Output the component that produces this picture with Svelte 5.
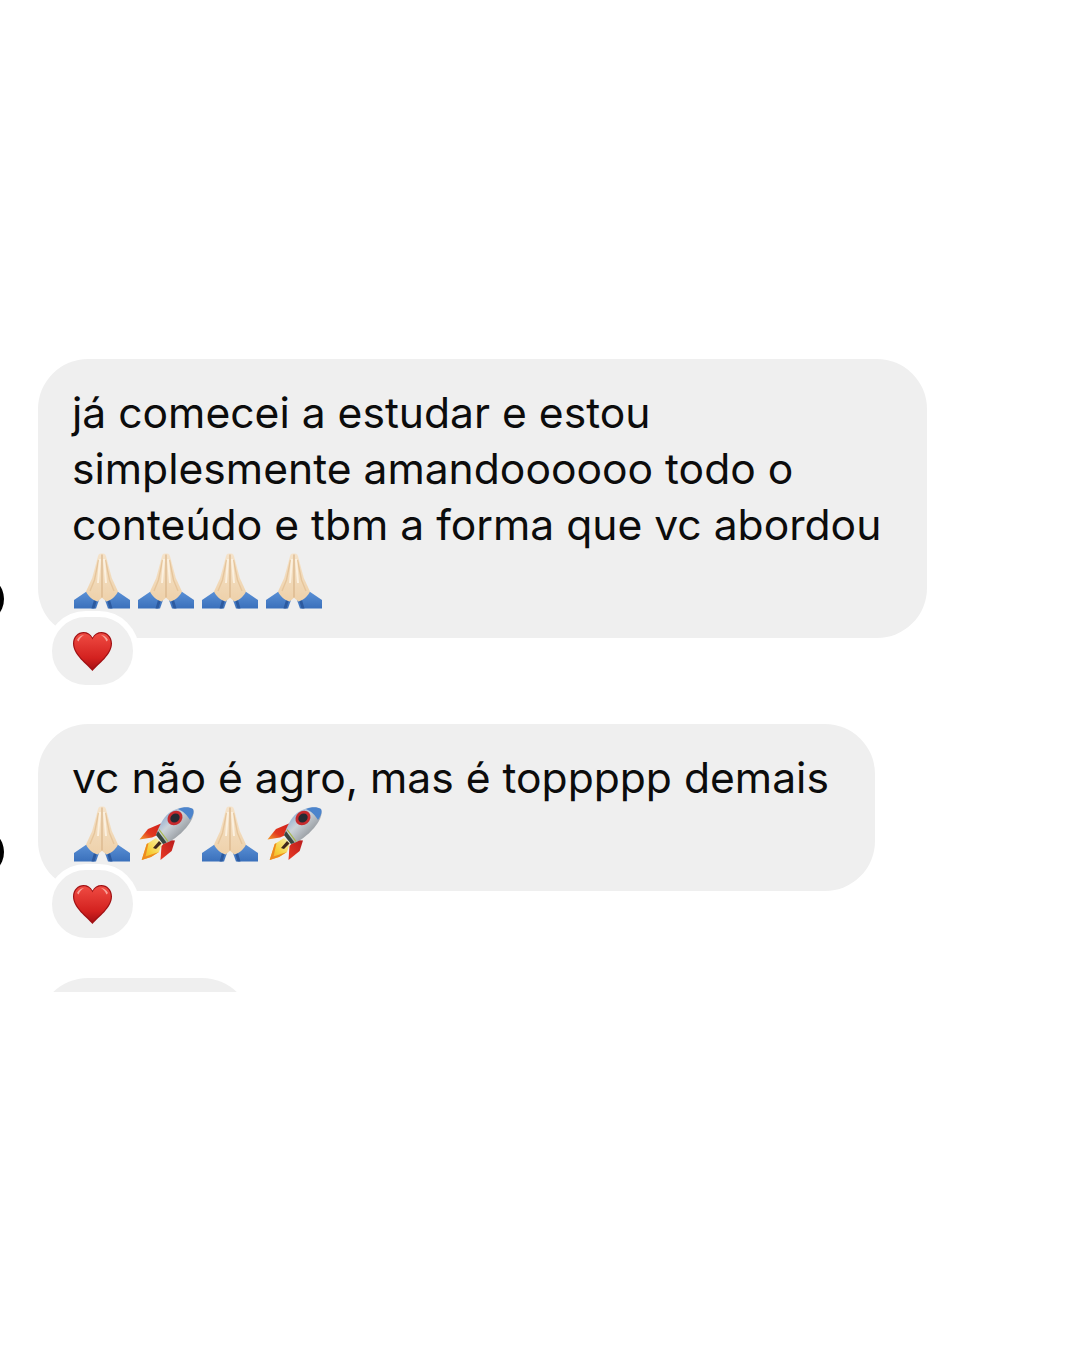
<script>
	const messages = [
		{
			lines: ['já comecei a estudar e estou', 'simplesmente amandoooooo todo o', 'conteúdo e tbm a forma que vc abordou'],
			emoji: ['pray', 'pray', 'pray', 'pray'],
			reaction: true,
		},
		{
			lines: ['vc não é agro, mas é toppppp demais'],
			emoji: ['pray', 'rocket', 'pray', 'rocket'],
			reaction: true,
		},
		{ lines: [], emoji: [], reaction: false },
	]
</script>

<svg class="defs" width="0" height="0" aria-hidden="true">
	<defs>
		<linearGradient id="skin" x1="0" y1="0" x2="0" y2="1">
			<stop offset="0" stop-color="#f5e3ca" />
			<stop offset="1" stop-color="#eed1aa" />
		</linearGradient>
		<linearGradient id="sleeve" x1="0" y1="0" x2="0" y2="1">
			<stop offset="0" stop-color="#5a90d6" />
			<stop offset="1" stop-color="#3a70bb" />
		</linearGradient>
		<linearGradient id="hull" x1="0" y1="0" x2="1" y2="1">
			<stop offset="0" stop-color="#5c8bc9" />
			<stop offset="0.42" stop-color="#ccd3d9" />
			<stop offset="0.7" stop-color="#9a9fa4" />
			<stop offset="1" stop-color="#6b7177" />
		</linearGradient>
		<linearGradient id="fin" x1="1" y1="0" x2="0" y2="1">
			<stop offset="0" stop-color="#cf1f1c" />
			<stop offset="0.6" stop-color="#e2391f" />
			<stop offset="1" stop-color="#f3a02c" />
		</linearGradient>
		<linearGradient id="finLow" x1="1" y1="0" x2="0" y2="1">
			<stop offset="0" stop-color="#b91b1d" />
			<stop offset="1" stop-color="#ea3a24" />
		</linearGradient>
		<linearGradient id="flame" x1="1" y1="0" x2="0" y2="1">
			<stop offset="0" stop-color="#fbf4b0" />
			<stop offset="0.6" stop-color="#f6cf3a" />
			<stop offset="1" stop-color="#f0a820" />
		</linearGradient>
		<linearGradient id="heartFill" x1="0" y1="0" x2="0" y2="1">
			<stop offset="0" stop-color="#ef4b42" />
			<stop offset="0.7" stop-color="#d3211f" />
			<stop offset="1" stop-color="#a81014" />
		</linearGradient>

		<symbol id="pray" viewBox="0 0 56 56">
			<path d="M0 47 12.5 38.5 25 47 22 55.5H0Z" fill="url(#sleeve)" />
			<path d="M56 47 43.5 38.5 31 47 34 55.5H56Z" fill="url(#sleeve)" />
			<path d="M20 47 22.5 48.5 20.5 55.5H17.5ZM36 47 33.5 48.5 35.5 55.5H38.5Z" fill="#2c5a9f" />
			<path d="M28 .6C25.5 .2 24.4 1.4 23.9 3.4L18.2 25 12 38.6C14 43 18.5 47.2 23.6 48.6L28 44.8 32.4 48.6C37.5 47.2 42 43 44 38.6L37.8 25 32.1 3.4C31.6 1.4 30.5 .2 28 .6Z" fill="url(#skin)" />
			<path d="M28 1.5V44.5" stroke="#d9b488" stroke-width="1.2" fill="none" />
			<path d="M24.5 7 20.5 27 16 38M31.5 7 35.5 27 40 38" stroke="#e6c59b" stroke-width="1.4" fill="none" />
			<path d="M26 6 24 30M30 6 32 30" stroke="#fbf0df" stroke-width="2" fill="none" />
		</symbol>

		<symbol id="rocket" viewBox="0 0 56 56">
			<path d="M23 17.5 10 23 1.5 33.5 14 31.5 24 27Z" fill="url(#fin)" />
			<path d="M37 34.5 33.7 45 22.5 54 23.5 40 29 34Z" fill="url(#finLow)" />
			<path d="M18 32 8.7 38 3.7 54 13 51 21 46 24 37Z" fill="url(#flame)" />
			<path d="M3.7 54 8.7 38 10.5 37 7.5 50.5 21 46 13 51Z" fill="#ee8a1e" />
			<path d="M15 42 21 35 23.5 37.5 18 43Z" fill="#41281c" />
			<path d="M55 3C50 0 39 1 31 7 25 12 21 20 18 29L25 38C33 36 42 29 48 22 54 15 57 8 55 3Z" fill="url(#hull)" />
			<path d="M55 3C51 .6 45 1 40 3 45 5 50 10 52 14 55 10 56.5 6 55 3Z" fill="#4c84cc" />
			<path d="M18 29 25 38 28.5 36.5 20 25Z" fill="#39473f" />
			<path d="M21 23.5 30 35.5" stroke="#a8b84a" stroke-width="1.2" fill="none" />
			<ellipse cx="37" cy="12" rx="8" ry="6.8" transform="rotate(-40 37 12)" fill="#c72a2d" />
			<ellipse cx="37" cy="12" rx="5" ry="4.2" transform="rotate(-40 37 12)" fill="#262a32" />
		</symbol>

		<symbol id="heart" viewBox="0 0 39 39">
			<path d="M19.5 39C14 32.5 0 23 0 11.5 0 4.5 5 0 10.5 0 14.5 0 17.8 2 19.5 5.5 21.2 2 24.5 0 28.5 0 34 0 39 4.5 39 11.5 39 23 25 32.5 19.5 39Z" fill="#a01013" />
			<path d="M19.5 37C14.5 31 1.2 22.5 1.2 11.5 1.2 5.2 5.6 1.2 10.6 1.2 14.6 1.2 17.9 3.4 19.5 7.5 21.1 3.4 24.4 1.2 28.4 1.2 33.4 1.2 37.8 5.2 37.8 11.5 37.8 22.5 24.5 31 19.5 37Z" fill="url(#heartFill)" />
			<path d="M4 8C5.5 4.5 8.5 3 11 3.2 8.5 4.5 6.5 6.5 5.6 9.6ZM35 8C33.5 4.5 30.5 3 28 3.2 30.5 4.5 32.5 6.5 33.4 9.6Z" fill="#f8a39b" />
		</symbol>
	</defs>
</svg>

<main class="thread">
	{#each messages as message}
		<div class="row" class:stub={!message.lines.length}>
			{#if message.lines.length}
				<span class="avatar"></span>
			{/if}
			<div class="bubble">
				{#each message.lines as line}
					<p class="line">{line}</p>
				{/each}
				{#if message.emoji.length}
					<div class="emoji">
						{#each message.emoji as name}
							<svg width="56" height="56"><use href="#{name}" /></svg>
						{/each}
					</div>
				{/if}
			</div>
			{#if message.reaction}
				<div class="reaction">
					<svg width="39" height="39"><use href="#heart" /></svg>
				</div>
			{/if}
		</div>
	{/each}
</main>

<style>
	:global(body) {
		background: #fff;
	}

	.defs {
		position: absolute;
	}

	.thread {
		display: flex;
		flex-direction: column;
		gap: 86px;
		height: 633px;
		margin-top: 359px;
		overflow: hidden;
		font-family: Inter, 'Liberation Sans', sans-serif;
		color: #0c0c0c;
	}

	.row {
		position: relative;
		display: flex;
		flex: none;
		padding-left: 38px;
	}

	.bubble {
		box-sizing: border-box;
		padding: 26px 46px 29px 34px;
		border-radius: 50px;
		background: #efefef;
	}

	.stub {
		margin-top: 1px;
	}

	.stub .bubble {
		width: 214px;
		height: 100px;
	}

	.line {
		margin: 0;
		font-size: 42.6px;
		line-height: 56px;
		white-space: nowrap;
	}

	.emoji {
		display: flex;
		gap: 8px;
		padding-left: 2px;
	}

	.emoji svg {
		display: block;
		filter: blur(0.4px);
	}

	.avatar {
		position: absolute;
		left: -44px;
		bottom: 15px;
		width: 48px;
		height: 48px;
		border-radius: 50%;
		background: #000;
	}

	.reaction {
		position: absolute;
		left: 46px;
		bottom: -53px;
		display: flex;
		align-items: center;
		justify-content: center;
		width: 81px;
		height: 68px;
		border: 6px solid #fff;
		border-radius: 40px;
		background: #efefef;
	}
</style>
